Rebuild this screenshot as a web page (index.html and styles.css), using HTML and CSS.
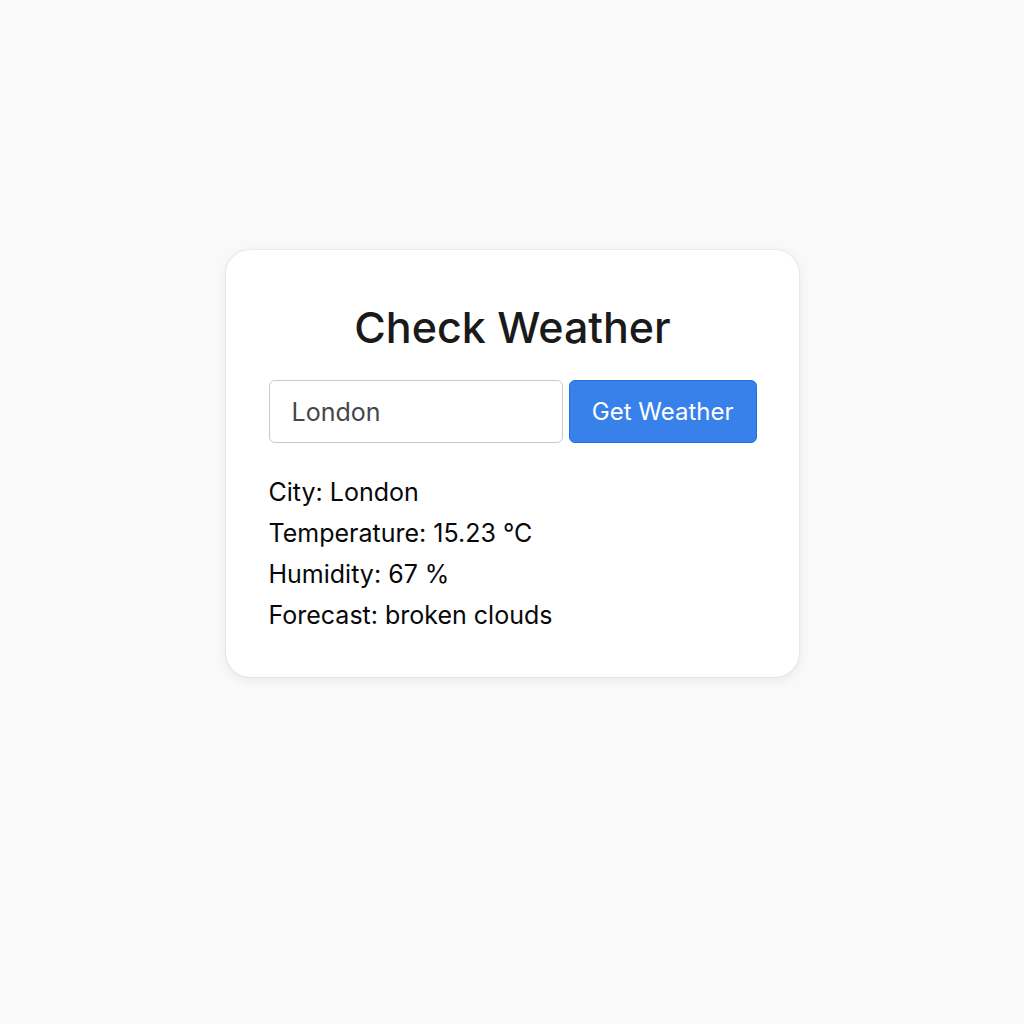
FILE: index.html
```html
<!DOCTYPE html>
<html lang="en">
<head>
<meta charset="utf-8">
<meta name="viewport" content="width=device-width, initial-scale=1">
<title>Check Weather</title>
<link rel="stylesheet" href="styles.css">
</head>
<body>
<main class="card">
  <h1 class="title">Check Weather</h1>
  <form class="search">
    <input class="search-input" type="text" name="city" value="London" aria-label="City">
    <button class="search-button" type="button">Get Weather</button>
  </form>
  <div class="result">
    <p>City: London</p>
    <p>Temperature: 15.23 °C</p>
    <p>Humidity: 67 %</p>
    <p>Forecast: broken clouds</p>
  </div>
</main>
</body>
</html>
```
FILE: styles.css
```css
* {
  box-sizing: border-box;
}

body {
  margin: 0;
  padding: 250px 24px 48px;
  background: #f9f9f9;
  color: #08080a;
  font-family: Inter, "Liberation Sans", sans-serif;
  font-size: 25px;
}

.card {
  max-width: 573px;
  margin: 0 auto;
  padding: 48px 42px 41px 43px;
  background: #fff;
  border-radius: 24px;
  box-shadow: 0 0 2px rgba(0, 0, 0, 0.14), 0 3px 12px rgba(0, 0, 0, 0.07);
}

.title {
  margin: 0 0 24px;
  color: #1a1a1a;
  font-size: 43px;
  font-weight: 500;
  line-height: 58px;
  text-align: center;
}

.search {
  display: flex;
  gap: 6px;
}

.search-input,
.search-button {
  height: 63px;
  border: 1px solid #c9cace;
  border-radius: 6px;
  font: inherit;
}

.search-input {
  flex: 1;
  min-width: 0;
  padding: 0 22px;
  background: #fff;
  color: #45464c;
}

.search-button {
  padding: 0 22px;
  border-color: #1f6fe5;
  background: #3880ea;
  color: #fff;
  font-size: 24px;
  white-space: nowrap;
}

.result {
  margin-top: 29px;
}

.result p {
  margin: 0;
  line-height: 41px;
}
```
